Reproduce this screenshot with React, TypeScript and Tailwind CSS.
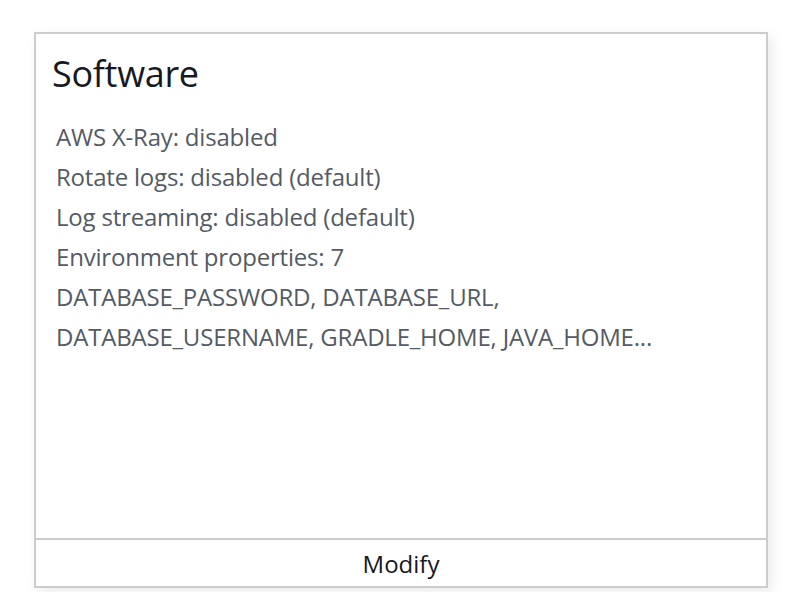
export default function App() {
  const lines = [
    'AWS X-Ray: disabled',
    'Rotate logs: disabled (default)',
    'Log streaming: disabled (default)',
    'Environment properties: 7',
    'DATABASE_PASSWORD, DATABASE_URL,',
    'DATABASE_USERNAME, GRADLE_HOME, JAVA_HOME...',
  ];

  return (
    <div className="w-[786px] h-[592px] bg-white pt-[32px] pl-[34px]" style={{ fontFamily: '"Open Sans", "Liberation Sans", sans-serif' }}>
      <div className="w-[734px] h-[556px] flex flex-col border-2 border-[#cccccc] bg-white shadow-[4px_4px_12px_rgba(0,0,0,0.08)]">
        <div className="flex-1 px-[16px] pt-[20px]">
          <h2 className="text-[36px] leading-[40px] text-[#16191f] tracking-[-0.3px]">Software</h2>
          <div className="mt-[23px] pl-[4px] flex flex-col">
            {lines.map((l) => (
              <div key={l} className="text-[24px] leading-[40px] text-[#545b64] tracking-[-0.2px]">{l}</div>
            ))}
          </div>
        </div>
        <div className="h-[48px] pt-[1px] border-t-2 border-[#cccccc] flex items-center justify-center text-[24px] text-[#16191f]">
          Modify
        </div>
      </div>
    </div>
  );
}
